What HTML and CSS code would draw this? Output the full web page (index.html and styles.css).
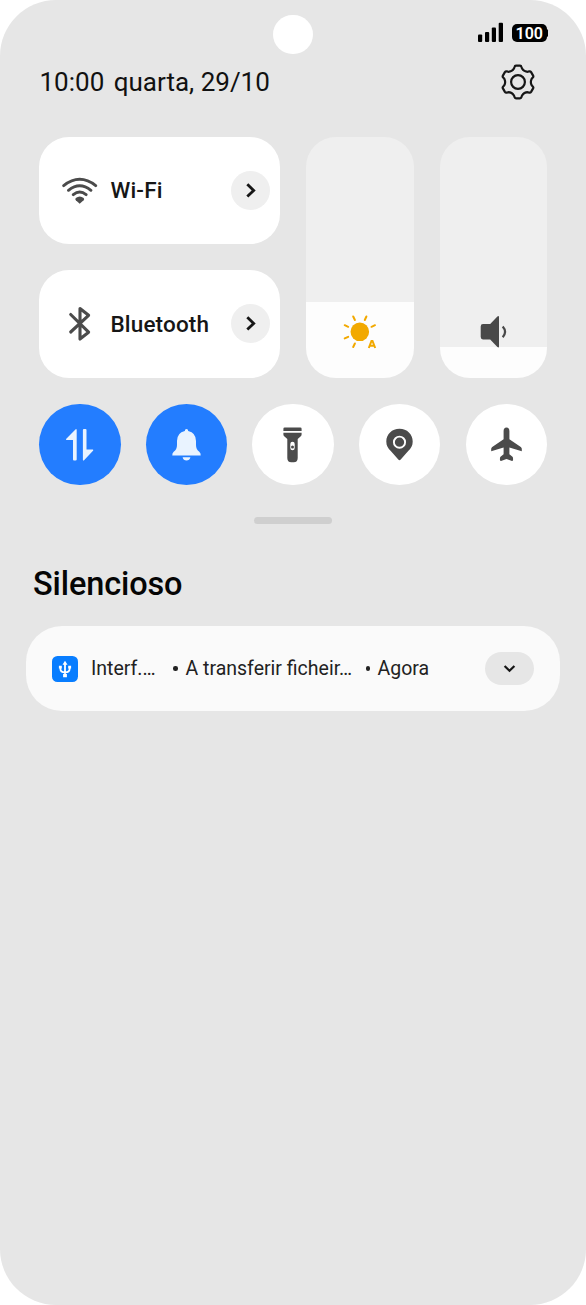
FILE: index.html
```
<!DOCTYPE html>
<html lang="pt">
<head>
<meta charset="utf-8">
<title>Centro de controlo</title>
<link rel="stylesheet" href="styles.css">
</head>
<body>
<main class="screen">
  <div class="camera"></div>
  <div class="status">
    <svg class="signal" viewBox="478 22 26 21" width="26" height="21"><g fill="#000"><rect x="478" y="34.5" width="4.2" height="7.5" rx="1"/><rect x="485" y="32" width="4.2" height="10" rx="1"/><rect x="491.800" y="27.500" width="4.200" height="14.500" rx="1"/><rect x="498.700" y="22.700" width="4.300" height="19.300" rx="1"/></g></svg>
    <div class="battery">100</div>
  </div>
  <header class="header">
    <span class="clock">10:00</span><span class="date">quarta, 29/10</span>
    <svg class="gear" viewBox="-18 -18 36 36" width="36" height="36"><g fill="none" stroke="#161616" stroke-width="2.200" stroke-linejoin="round"><path d="M-2-16.300H2Q3.200-16.300 3.500-15L4-13.500Q6-10.300 9.700-10.200L11.200-10.600Q12.500-10.800 13.100-9.900L15.100-6.400Q15.700-5.400 14.800-4.500L13.700-3.300Q12 0 13.700 3.300L14.800 4.500Q15.700 5.400 15.100 6.400L13.100 9.900Q12.500 10.800 11.200 10.600L9.700 10.200Q6 10.300 4 13.500L3.500 15Q3.200 16.300 2 16.300H-2Q-3.200 16.300-3.500 15L-4 13.500Q-6 10.300-9.700 10.200L-11.200 10.600Q-12.500 10.800-13.100 9.900L-15.100 6.400Q-15.700 5.400-14.800 4.500L-13.700 3.300Q-12 0-13.700-3.300L-14.800-4.500Q-15.700-5.400-15.100-6.400L-13.100-9.900Q-12.500-10.800-11.200-10.600L-9.700-10.200Q-6-10.300-4-13.500L-3.500-15Q-3.200-16.300-2-16.300Z"/><circle r="6.900"/></g></svg>
  </header>

  <section class="panel">
    <div class="tiles">
      <div class="tile">
        <svg class="tile-icon" viewBox="62 172 36 36" width="36" height="36"><g fill="none" stroke="#4b4b4b" stroke-width="2.900" stroke-linecap="round"><path d="M63.700 185.700Q79.700 173 95.700 185.700M68.500 190.300Q79.700 181.300 90.900 190.300M73.300 194.700Q79.700 189.400 86.100 194.700"/></g><path fill="#4b4b4b" d="M75.800 198Q79.700 195 83.700 198Q84.700 199.200 83.600 200.200L79.700 203.700L75.800 200.200Q74.700 199.200 75.800 198Z"/></svg>
        <span class="tile-name">Wi-Fi</span>
        <span class="go"><svg viewBox="0 0 39 39" width="39" height="39"><path d="M16.300 13.200L22.700 19.400L16.300 25.600" fill="none" stroke="#161616" stroke-width="2.800"/></svg></span>
      </div>
      <div class="tile">
        <svg class="tile-icon" viewBox="62 306 36 36" width="36" height="36"><path d="M70.700 314.500L88.600 332.200L80 339V308.500L88.600 315.300L70.700 332" fill="none" stroke="#4b4b4b" stroke-width="3.100" stroke-linejoin="round" stroke-linecap="round"/></svg>
        <span class="tile-name">Bluetooth</span>
        <span class="go"><svg viewBox="0 0 39 39" width="39" height="39"><path d="M16.300 13.200L22.700 19.400L16.300 25.600" fill="none" stroke="#161616" stroke-width="2.800"/></svg></span>
      </div>
    </div>
    <div class="slider brightness">
      <svg viewBox="340 312 40 40" width="40" height="40"><circle cx="359.800" cy="331.800" r="9.300" fill="#f2a900"/><path d="M353.200 316.500L354.900 320M366.400 316.500L364.800 320M344.700 325.200L348.200 326.800M375 325.200L371.500 326.800M344.700 338.400L348.200 336.800M353.200 347L354.900 343.500" stroke="#f2a900" stroke-width="2" stroke-linecap="round"/><path d="M368.800 348L371.500 341H372.500L375.200 348M370 345.700H374" fill="none" stroke="#f2a900" stroke-width="2"/></svg>
    </div>
    <div class="slider volume">
      <svg viewBox="473 312 40 40" width="40" height="40"><path d="M483 324H490.200L497.400 316.500Q498.900 315.400 499 317V346.500Q498.900 348.200 497.400 347L490.200 339.400H483Q480.700 339.400 480.700 337V326.400Q480.700 324 483 324Z" fill="#484848"/><path d="M502.700 326.500Q507.400 331.800 502.700 337.300" fill="none" stroke="#484848" stroke-width="2.200"/></svg>
    </div>
  </section>

  <section class="toggles">
    <div class="toggle on"><svg viewBox="0 0.500 81 81" width="81" height="81" fill="#e9f3ff"><path d="M37.700 26.200V56Q37.700 57 36.500 57H35Q34 57 34 56V36.600H27.500Q26.500 36.300 27.300 35.300L36.200 26.200Q37.200 25 37.700 26.200ZM43.900 26.500Q43.900 25.500 45 25.500H46.500Q47.500 25.500 47.500 26.500V46H53.800Q54.800 46.300 54 47.300L45.300 56.400Q44.300 57.500 43.900 56.400Z"/></svg></div>
    <div class="toggle on"><svg viewBox="0 0.500 81 81" width="81" height="81" fill="#e9f3ff"><path d="M40.500 25.500Q42.200 25.500 42.200 27.500Q50 29.300 50 37.500V41.500Q50 46 53.300 48.300Q55 50 54.700 52H26.300Q26 50 27.700 48.300Q31 46 31 41.500V37.500Q31 29.300 38.800 27.500Q38.800 25.500 40.500 25.500ZM36.600 53.700H44.400Q43.600 57 40.500 57Q37.400 57 36.600 53.700Z"/></svg></div>
    <div class="toggle"><svg viewBox="0 0.500 81 81" width="81" height="81" fill="#4b4b4b"><path d="M32.700 24H48.300Q49.600 24 49.600 25.300V27.400H31.400V25.300Q31.400 24 32.700 24ZM31.400 29.200H49.600V31Q49.600 32.100 48.800 32.700L45.700 35.500V54.500Q45.700 58.700 41.700 58.700H39.300Q35.300 58.700 35.300 54.500V35.500L32.200 32.700Q31.400 32.100 31.400 31Z"/><rect x="38.300" y="38.200" width="4.400" height="8.600" rx="2.200" fill="#fff"/><circle cx="40.500" cy="43.600" r="1.500"/></svg></div>
    <div class="toggle"><svg viewBox="0 0.500 81 81" width="81" height="81"><path d="M40.500 25.200C48 25.200 53.700 30.700 53.700 37.900C53.700 42.100 52 44.700 49.200 47.600L41.700 56Q40.500 57.300 39.300 56L31.800 47.600C29 44.700 27.300 42.100 27.300 37.900C27.300 30.700 33 25.200 40.500 25.200Z" fill="#4b4b4b"/><circle cx="40.500" cy="38.700" r="5.600" fill="none" stroke="#fff" stroke-width="1.900"/></svg></div>
    <div class="toggle"><svg viewBox="0 0.500 81 81" width="81" height="81" fill="#4b4b4b"><path d="M40.500 24Q43.400 24 43.400 27.500V35.800L54.800 43.500Q56 44.500 55.800 46V47.700L43.400 44V50.800L46.500 53.200Q47.300 54 47 57L46 57.500L40.500 55.600L35 57.500L34 57Q33.700 54 34.500 53.200L37.600 50.800V44L25.200 47.700V46Q25 44.500 26.200 43.500L37.600 35.800V27.500Q37.600 24 40.500 24Z"/></svg></div>
  </section>

  <div class="handle"></div>
  <h1 class="heading">Silencioso</h1>

  <article class="notice">
    <span class="usb"><svg viewBox="0 0 26 26" width="26" height="26" fill="none" stroke="#fff" stroke-width="1.800"><path d="M13 7V19M8.400 11.500V13Q8.400 16.300 13 16.300Q17.600 16.300 17.600 13V11.500"/><path d="M13 4.700L15.500 8.700H10.500ZM6.900 9.800H9.800V12.500H6.900ZM16.200 9.800H19.100V12.500H16.200ZM11.100 17.900H14.900V21.200H11.100Z" fill="#fff" stroke="none"/></svg></span>
    <span class="app">Interf.…</span>
    <i class="dot"></i>
    <span class="message">A transferir ficheir…</span>
    <i class="dot"></i>
    <span class="when">Agora</span>
    <span class="expand"><svg viewBox="0 0 49 33" width="49" height="33"><path d="M19.600 14L24.500 18.800L29.400 14" fill="none" stroke="#161616" stroke-width="2.200"/></svg></span>
  </article>
</main>
</body>
</html>
```

FILE: styles.css
```
* { box-sizing: border-box; }
body { margin: 0; background: #fff; font-family: Roboto, "Liberation Sans", sans-serif; color: #161616; }
svg { display: block; flex: none; }
.screen { position: relative; width: 586px; height: 1305px; border-radius: 56px; background: #e6e6e6; overflow: hidden; }
.camera { position: absolute; left: 273px; top: 14.500px; width: 39.500px; height: 39.500px; border-radius: 50%; background: #fff; }
.status { display: flex; justify-content: flex-end; align-items: flex-start; gap: 8px; height: 63px; padding: 22px 39.500px 0 0; }
.battery { position: relative; width: 34.500px; height: 18.500px; margin-top: 1.500px; border-radius: 5px; background: #000; color: #fff; font-size: 16px; font-weight: 600; line-height: 19px; text-align: center; }
.battery::after { content: ""; position: absolute; right: -1.500px; top: 5.500px; width: 3px; height: 8px; border-radius: 2px; background: #000; }
.header { display: flex; align-items: center; height: 37px; padding: 0 50.500px 0 39.500px; font-size: 26px; color: #111; white-space: nowrap; }
.date { margin-left: 9.500px; }
.gear { margin-left: auto; }
.panel { display: grid; grid-template-columns: 241px 107.500px 107.500px; column-gap: 26px; height: 241px; margin: 36.500px 39px 0; }
.tiles { display: grid; grid-template-rows: 107.500px 107.500px; row-gap: 26px; }
.tile { display: flex; align-items: center; padding: 0 10px 0 23px; border-radius: 30px; background: #fff; }
.tile-name { margin-left: 12.500px; font-size: 22.500px; font-weight: 500; letter-spacing: 0.150px; }
.go { margin-left: auto; border-radius: 50%; background: #efefef; }
.slider { display: flex; justify-content: center; align-items: flex-end; padding-bottom: 26px; border-radius: 30px; }
.brightness { background: linear-gradient(#efefef 165px, #fdfdfd 165px); }
.volume { background: linear-gradient(#efefef 210.500px, #fdfdfd 210.500px); }
.toggles { display: flex; justify-content: space-between; margin: 26px 39px 0; }
.toggle { width: 81.500px; height: 81.500px; border-radius: 50%; background: #fff; }
.on { background: #237dff; }
.handle { width: 78px; height: 7px; margin: 32px auto 0; border-radius: 4px; background: #cfcfcf; }
.heading { margin: 40px 0 0 33px; height: 40px; font-size: 32.500px; line-height: 40px; font-weight: 500; letter-spacing: -0.120px; color: #050505; }
.notice { display: flex; align-items: center; height: 85px; margin: 22px 26px 0; padding: 0 26px; border-radius: 36px; background: #fafafa; font-size: 19.500px; white-space: nowrap; color: #222; }
.usb { border-radius: 5.500px; background: #087dff; }
.app { width: 82px; margin-left: 13px; }
.dot { flex: none; width: 4.500px; height: 4.500px; border-radius: 50%; background: #222; }
.message { width: 180px; margin-left: 8px; }
.when { margin-left: 7.500px; }
.expand { margin-left: auto; border-radius: 17px; background: #e6e6e6; }
```
